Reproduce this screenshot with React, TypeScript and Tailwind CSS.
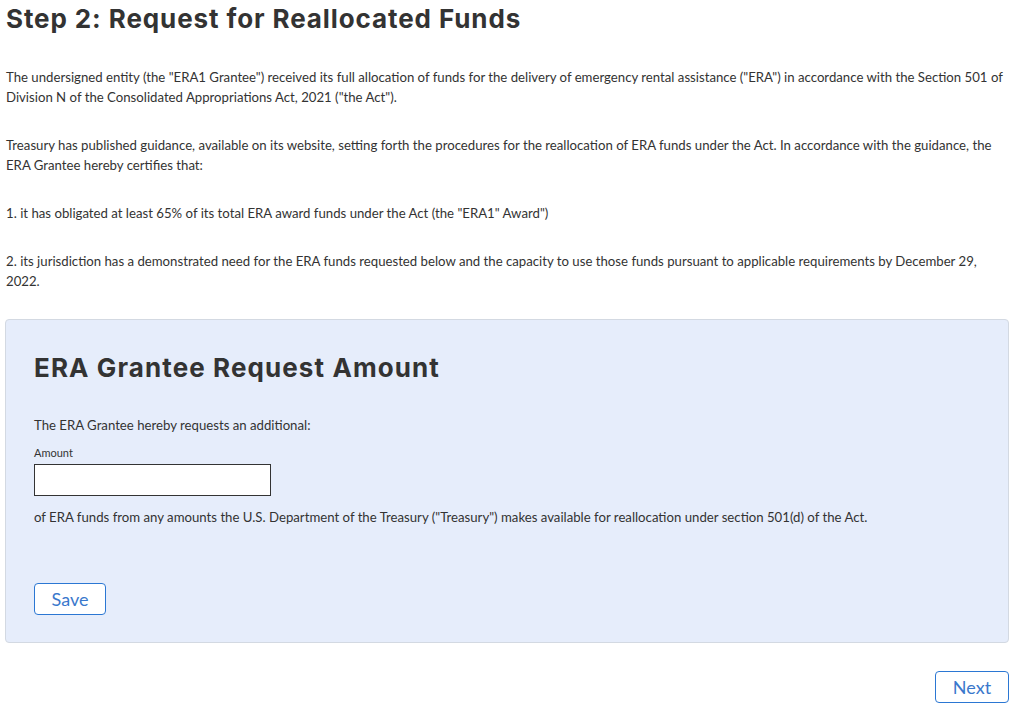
const App = () => {
  return (
    <div className="min-h-[716px] bg-white pl-[5px] pr-[12px] pt-[3px] pb-4 font-['Lato',sans-serif] text-[#333]">
      <h1 className="ml-px font-['Inter',sans-serif] text-[26px] font-bold leading-[32px] tracking-[0.9px] text-[#333]">
        Step 2: Request for Reallocated Funds
      </h1>

      <div className="mt-[32px] ml-px text-[13.2px] leading-[20px]">
        <p>
          The undersigned entity (the "ERA1 Grantee") received its full allocation of funds for the delivery of
          emergency rental assistance ("ERA") in accordance with the Section 501 of Division N of the Consolidated
          Appropriations Act, 2021 ("the Act").
        </p>
        <p className="mt-[28px]">
          Treasury has published guidance, available on its website, setting forth the procedures for the reallocation
          of ERA funds under the Act. In accordance with the guidance, the ERA Grantee hereby certifies that:
        </p>
        <p className="mt-[28px]">
          1. it has obligated at least 65% of its total ERA award funds under the Act (the "ERA1" Award")
        </p>
        <p className="mt-[28px]">
          2. its jurisdiction has a demonstrated need for the ERA funds requested below and the capacity to use those
          funds pursuant to applicable requirements by December 29, 2022.
        </p>
      </div>

      <section className="mt-[28px] rounded border border-[#d3d9e2] bg-[#e6edfb] px-[28px] pt-[32px] pb-[27px]">
        <h2 className="font-['Inter',sans-serif] text-[26px] font-bold leading-[32px] tracking-[1.1px] text-[#333]">
          ERA Grantee Request Amount
        </h2>
        <p className="mt-[31px] text-[13.2px] leading-[20px]">The ERA Grantee hereby requests an additional:</p>
        <label className="mt-[10px] block text-[11px] leading-[16px]" htmlFor="amount">
          Amount
        </label>
        <input
          id="amount"
          type="text"
          className="mt-[3px] block h-[32px] w-[237px] border border-[#333] bg-white px-2 text-[13px] outline-none"
        />
        <p className="mt-[11px] text-[13.2px] leading-[20px]">
          of ERA funds from any amounts the U.S. Department of the Treasury ("Treasury") makes available for reallocation
          under section 501(d) of the Act.
        </p>
        <button
          type="button"
          className="mt-[56px] h-[32px] w-[72px] rounded border border-[#2b77d3] bg-white text-[18px] text-[#3a78cc]"
        >
          Save
        </button>
      </section>

      <div className="mt-[28px] flex justify-end">
        <button
          type="button"
          className="h-[32px] w-[74px] rounded border border-[#2b77d3] bg-white text-[18px] text-[#3a78cc]"
        >
          Next
        </button>
      </div>
    </div>
  );
};

export default App;
